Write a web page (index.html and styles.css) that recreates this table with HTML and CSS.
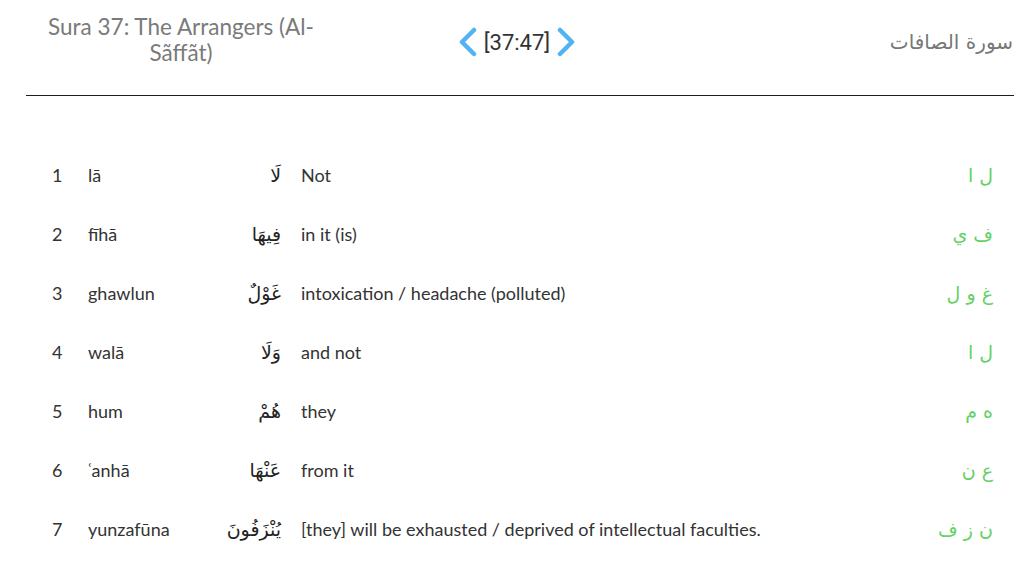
FILE: index.html
```html
<!DOCTYPE html>
<html lang="en">
<head>
<meta charset="utf-8">
<link rel="stylesheet" href="styles.css">
</head>
<body>
<div class="page">
  <header class="header">
    <div class="title">Sura 37: The Arrangers (Al-<br>Sãffãt)</div>
    <nav class="nav">
      <svg class="chev" width="20" height="30" viewBox="0 0 20 30"><polyline points="17,3 5,15 17,27" fill="none" stroke="#52b3f2" stroke-width="4.5" stroke-linecap="round" stroke-linejoin="round"/></svg>
      <span class="ref">[37:47]</span>
      <svg class="chev" width="20" height="30" viewBox="0 0 20 30"><polyline points="3,3 15,15 3,27" fill="none" stroke="#52b3f2" stroke-width="4.5" stroke-linecap="round" stroke-linejoin="round"/></svg>
    </nav>
    <div class="ar-title" lang="ar" dir="rtl">سورة الصافات</div>
  </header>
  <div class="rows">
    <div class="row"><span class="num">1</span><span class="tr">lā</span><span class="ar" dir="rtl">لَا</span><span class="en">Not</span><span class="root" dir="rtl">ل ا</span></div>
    <div class="row"><span class="num">2</span><span class="tr">fīhā</span><span class="ar" dir="rtl">فِيهَا</span><span class="en">in it (is)</span><span class="root" dir="rtl">ف ي</span></div>
    <div class="row"><span class="num">3</span><span class="tr">ghawlun</span><span class="ar" dir="rtl">غَوْلٌ</span><span class="en">intoxication / headache (polluted)</span><span class="root" dir="rtl">غ و ل</span></div>
    <div class="row"><span class="num">4</span><span class="tr">walā</span><span class="ar" dir="rtl">وَلَا</span><span class="en">and not</span><span class="root" dir="rtl">ل ا</span></div>
    <div class="row"><span class="num">5</span><span class="tr">hum</span><span class="ar" dir="rtl">هُمْ</span><span class="en">they</span><span class="root" dir="rtl">ه م</span></div>
    <div class="row"><span class="num">6</span><span class="tr">ʿanhā</span><span class="ar" dir="rtl">عَنْهَا</span><span class="en">from it</span><span class="root" dir="rtl">ع ن</span></div>
    <div class="row"><span class="num">7</span><span class="tr">yunzafūna</span><span class="ar" dir="rtl">يُنْزَفُونَ</span><span class="en">[they] will be exhausted / deprived of intellectual faculties.</span><span class="root" dir="rtl">ن ز ف</span></div>
  </div>
</div>
</body>
</html>
```

FILE: styles.css
```css
html, body {
  margin: 0;
  padding: 0;
  background: #fff;
}
body {
  font-family: Lato, "Open Sans", "DejaVu Sans", sans-serif;
  color: #2a2a2a;
}
.page {
  margin: 0 8px 0 26px;
}
.header {
  display: flex;
  align-items: flex-start;
  height: 96px;
  border-bottom: 1.5px solid #1e1e1e;
  box-sizing: border-box;
}
.title {
  width: 310px;
  text-align: center;
  font-size: 22.5px;
  line-height: 26px;
  color: #7a7a7a;
  padding-top: 14px;
}
.nav {
  flex: 1;
  display: flex;
  align-items: center;
  justify-content: center;
  gap: 7px;
  padding-top: 27px;
  padding-right: 192px;
}
.chev {
  display: block;
}
.ref {
  font-family: Roboto, "Liberation Sans", sans-serif;
  font-size: 22px;
  color: #333;
}
.ar-title {
  font-family: "DejaVu Sans", sans-serif;
  font-size: 20px;
  color: #777;
  padding-top: 30px;
  padding-right: 1px;
}
.rows {
  padding-top: 49px;
}
.row {
  display: grid;
  grid-template-columns: 36px 130px 63px 1fr auto;
  align-items: center;
  height: 59px;
  padding-left: 26px;
  padding-right: 21px;
  font-size: 18px;
}
.num {
  color: #333;
}
.tr {
  color: #333;
}
.ar {
  font-family: "DejaVu Sans", sans-serif;
  font-size: 19px;
  text-align: right;
  color: #222;
}
.en {
  padding-left: 20px;
  color: #333;
}
.root {
  font-family: "DejaVu Sans", sans-serif;
  font-size: 19px;
  color: #64d164;
}
```
